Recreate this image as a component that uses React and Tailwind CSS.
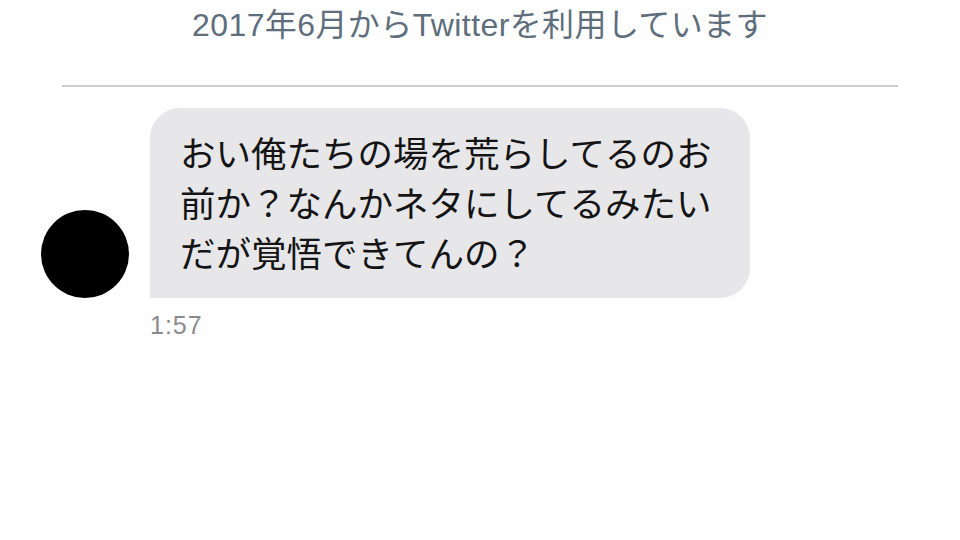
export default function App() {
  return (
    <div className="w-[960px] h-[540px] bg-[#fefefe] overflow-hidden flex flex-col" style={{ fontFamily: '"Noto Sans CJK JP", "Noto Sans", sans-serif' }}>
      <div className="h-[46px] pt-[5px] flex justify-center">
        <span className="text-[32px] leading-[40px] text-[#5f6e7c] tracking-[0.4px]" style={{ fontFamily: '"Liberation Sans", "Noto Sans CJK JP", sans-serif' }}>
          2017年6月からTwitterを利用しています
        </span>
      </div>
      <div className="mx-[62px] mt-[39px] h-[2px] bg-[#cfcfd2]" />
      <div className="mt-[21px] flex items-end pl-[41px] gap-[21px]">
        <div className="w-[88px] h-[88px] rounded-full bg-black shrink-0" />
        <div className="w-[600px] bg-[#e7e7ea] rounded-[30px] rounded-bl-none pl-[30px] pr-[20px] pt-[19px] pb-[21px]">
          <p className="text-[35.5px] leading-[50px] text-[#141414]">
            おい俺たちの場を荒らしてるのお前か？なんかネタにしてるみたいだが覚悟できてんの？
          </p>
        </div>
      </div>
      <div className="ml-[150px] mt-[12px] text-[25px] leading-[30px] text-[#8a8a8e] tracking-[1px]" style={{ fontFamily: '"Liberation Sans", sans-serif' }}>
        1:57
      </div>
    </div>
  );
}
